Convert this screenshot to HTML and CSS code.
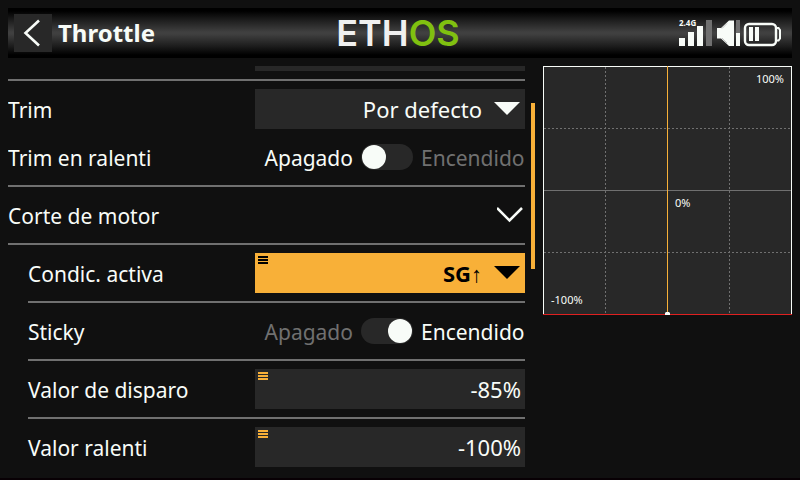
FILE: index.html
```html
<!DOCTYPE html>
<html lang="es">
<head>
<meta charset="utf-8">
<title>Throttle</title>
<link rel="stylesheet" href="styles.css">
</head>
<body>
<header class="topbar">
  <div class="topbar-left">
    <button class="back" type="button" aria-label="Volver">
      <svg width="38" height="38" viewBox="0 0 38 38"><path d="M25 6.500 11.500 19 25 31.500" fill="none" stroke="#f8fcf8" stroke-width="2.600"/></svg>
    </button>
    <h1 class="title">Throttle</h1>
  </div>
  <div class="logo">ETH<span class="logo-accent">OS</span></div>
  <div class="status">
    <svg width="104" height="36" viewBox="678 15 104 36" fill="#f8fcf8">
      <text class="band" x="679" y="26">2.4G</text>
      <rect x="679" y="38" width="6" height="8"/>
      <rect x="688" y="32" width="6" height="14"/>
      <rect x="697" y="26" width="6" height="20"/>
      <rect x="706" y="20" width="6" height="26" fill="#707070"/>
      <path d="M717 28h4l8-7.500h5v25.500h-5l-8-7.500h-4z"/>
      <path d="M722 28.500l5-5M722 38l5 5" fill="none" stroke="#a0a0a0" stroke-width=".6"/>
      <rect x="736" y="20" width="4" height="13" fill="#707070"/>
      <rect x="736" y="33" width="4" height="13"/>
      <rect x="745" y="24" width="31" height="21" rx="4" fill="none" stroke="#f8fcf8" stroke-width="2.400"/>
      <path d="M776 28h2.500l1.500 2v8.500l-1.500 2H776" fill="none" stroke="#f8fcf8" stroke-width="2"/>
      <rect x="749" y="27" width="4" height="14"/>
      <rect x="755" y="27" width="4" height="14"/>
    </svg>
  </div>
</header>
<main class="content">
  <form class="settings">
    <div class="scrolled-row"><div class="scrolled-field"></div></div>
    <section class="group">
      <div class="row">
        <label for="trim">Trim</label>
        <div class="field">
          <select id="trim" class="box"><option>Por defecto</option></select>
          <svg class="caret" width="26" height="13" viewBox="0 0 26 13"><path d="M0 0h26L13 13z" fill="#f8fcf8"/></svg>
        </div>
      </div>
      <div class="row">
        <label for="idle">Trim en ralenti</label>
        <div class="choice">
          <span class="off">Apagado</span>
          <input id="idle" class="switch" type="checkbox">
          <span class="on">Encendido</span>
        </div>
      </div>
    </section>
    <section class="group">
      <button class="row expander" type="button"><span>Corte de motor</span>
        <svg width="28" height="16" viewBox="0 0 28 16"><path d="M0 1 12.500 13.500 25 1" fill="none" stroke="#f8fcf8" stroke-width="2.500"/></svg>
      </button>
    </section>
    <section class="group nested">
      <div class="row">
        <label for="condition">Condic. activa</label>
        <div class="field focused">
          <select id="condition" class="box"><option>SG↑</option></select>
          <svg class="caret" width="26" height="13" viewBox="0 0 26 13"><path d="M0 0h26L13 13z"/></svg>
          <svg class="menu" width="10" height="8" viewBox="0 0 10 8"><path d="M0 0h10v2H0zM0 3h10v2H0zM0 6h10v2H0z"/></svg>
        </div>
      </div>
    </section>
    <section class="group nested">
      <div class="row">
        <label for="sticky">Sticky</label>
        <div class="choice">
          <span class="off">Apagado</span>
          <input id="sticky" class="switch" type="checkbox" checked>
          <span class="on">Encendido</span>
        </div>
      </div>
    </section>
    <section class="group nested">
      <div class="row">
        <label for="trigger">Valor de disparo</label>
        <div class="field">
          <input id="trigger" class="box" type="text" value="-85%">
          <svg class="menu" width="10" height="8" viewBox="0 0 10 8"><path d="M0 0h10v2H0zM0 3h10v2H0zM0 6h10v2H0z"/></svg>
        </div>
      </div>
    </section>
    <section class="group nested">
      <div class="row">
        <label for="idle-value">Valor ralenti</label>
        <div class="field">
          <input id="idle-value" class="box" type="text" value="-100%">
          <svg class="menu" width="10" height="8" viewBox="0 0 10 8"><path d="M0 0h10v2H0zM0 3h10v2H0zM0 6h10v2H0z"/></svg>
        </div>
      </div>
    </section>
  </form>
  <div class="scrollbar"></div>
  <svg class="chart" viewBox="0 0 249 249">
    <rect width="249" height="249" fill="#282828"/>
    <g fill="none" stroke="#707070" shape-rendering="crispEdges">
      <path d="M1 62.500H248M1 186.500H248M62.500 1V248M186.500 1V248" stroke-dasharray="2 2"/>
      <path d="M1 124.500H248"/>
    </g>
    <rect x=".5" y=".5" width="248" height="248" fill="none" stroke="#f8fcf8"/>
    <path d="M124.500 0V248" stroke="#f8b038"/>
    <path d="M0 248.500H249" stroke="#e02020"/>
    <path d="M122 249v-2l1-1h3l1 1v2z" fill="#f8fcf8"/>
    <text x="241" y="17" text-anchor="end">100%</text>
    <text x="132" y="141">0%</text>
    <text x="8" y="238">-100%</text>
  </svg>
</main>
</body>
</html>
```
FILE: styles.css
```css
* {
  box-sizing: border-box;
}

body {
  margin: 0;
  height: 100vh;
  padding: 8px 8px 0;
  display: flex;
  flex-direction: column;
  gap: 8px;
  overflow: hidden;
  background: #101010;
  border-bottom: 2px solid #080004;
  color: #f8fcf8;
  font-family: "Noto Sans", "Liberation Sans", sans-serif;
  font-size: 21px;
  line-height: 30px;
}

button,
input,
select {
  margin: 0;
  padding: 0;
  border: 0;
  border-radius: 0;
  appearance: none;
  background: none;
  color: inherit;
  font: inherit;
}

.topbar {
  flex: none;
  display: grid;
  grid-template-columns: 1fr auto 1fr;
  align-items: center;
  padding: 6px 10px 6px 6px;
  background: linear-gradient(#000 0, #000 6%, #202020 26%, #404040 48%, #404040 52%, #202020 74%, #000 94%, #000 100%);
}

.topbar-left {
  display: flex;
  align-items: center;
  gap: 6px;
}

.back {
  width: 38px;
  height: 38px;
  background: #282828;
}

.back svg {
  display: block;
}

.title {
  margin: 0;
  font-size: 24px;
  line-height: 38px;
  font-weight: 700;
}

.logo {
  font-family: Inter, sans-serif;
  font-size: 36px;
  line-height: 38px;
  font-weight: 600;
  color: #f0f0f0;
}

.logo-accent {
  color: #80c010;
}

.status {
  justify-self: end;
}

.status svg {
  display: block;
}

.band {
  font-size: 8px;
  line-height: 8px;
  font-weight: 700;
}

.content {
  flex: 1;
  min-height: 0;
  display: flex;
  align-items: flex-start;
}

.settings {
  flex: 1;
  height: 100%;
  overflow: hidden;
}

.scrolled-row {
  padding-bottom: 8px;
  border-bottom: 2px solid #707070;
}

.scrolled-field {
  width: 270px;
  height: 5px;
  margin-left: auto;
  background: #282828;
}

.group {
  display: flex;
  flex-direction: column;
  gap: 8px;
  padding: 8px 0;
  border-bottom: 2px solid #707070;
}

.group:last-child {
  border-bottom: 0;
}

.nested {
  margin-left: 20px;
}

.row {
  height: 40px;
  display: flex;
  align-items: center;
  justify-content: space-between;
}

.row label,
.row span {
  padding-top: 2px;
}

.expander {
  width: 100%;
  text-align: left;
}

.field {
  position: relative;
  width: 270px;
  height: 40px;
  background: #282828;
  font-size: 22px;
}

.box {
  display: block;
  width: 100%;
  height: 100%;
  padding-right: 4px;
  text-align: right;
  text-align-last: right;
}

select.box {
  padding-right: 43px;
}

.focused {
  background: #f8b038;
  color: #000;
  font-weight: 700;
}

.caret {
  position: absolute;
  top: 13px;
  right: 5px;
  pointer-events: none;
}

.menu {
  position: absolute;
  top: 3px;
  left: 3px;
  fill: #f8b038;
}

.focused .menu {
  fill: #000;
}

.choice {
  width: 270px;
  display: grid;
  grid-template-columns: 1fr 52px 104px;
  gap: 8px;
  align-items: center;
}

.off {
  text-align: right;
}

.choice:has(:checked) .off,
.switch:not(:checked) + .on {
  color: #707070;
}

.switch {
  width: 52px;
  height: 26px;
  padding: 1px;
  border-radius: 13px;
  background: #282828;
}

.switch::before {
  content: "";
  display: block;
  width: 24px;
  height: 24px;
  border-radius: 50%;
  background: #f8fcf8;
}

.switch:checked::before {
  margin-left: auto;
}

.scrollbar {
  flex: none;
  width: 4px;
  height: 166px;
  margin: 37px 8px 0 6px;
  background: #f8b038;
}

.chart {
  flex: none;
  width: 249px;
  fill: #f8fcf8;
  font-size: 11px;
}
```
